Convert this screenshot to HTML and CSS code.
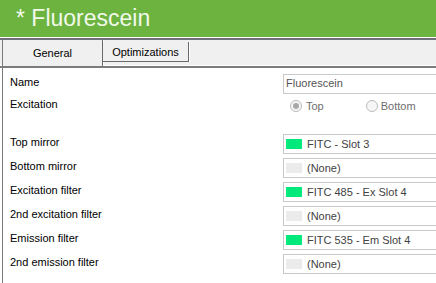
FILE: index.html
```html
<!DOCTYPE html>
<html>
<head>
<meta charset="utf-8">
<link rel="stylesheet" href="styles.css">
</head>
<body>
<div class="title">* Fluorescein</div>
<div class="tabstrip">
  <div class="tab selected">General</div>
  <div class="tab">Optimizations</div>
</div>
<div class="panel">
  <div class="row name-row">
    <div class="label">Name</div>
    <div class="box text">Fluorescein</div>
  </div>
  <div class="row exc-row">
    <div class="label">Excitation</div>
    <div class="radios">
      <span class="radio on"></span><span class="rtext">Top</span>
      <span class="radio second"></span><span class="rtext">Bottom</span>
    </div>
  </div>
  <div class="row first-combo">
    <div class="label">Top mirror</div>
    <div class="box combo"><span class="sw green"></span>FITC - Slot 3</div>
  </div>
  <div class="row">
    <div class="label">Bottom mirror</div>
    <div class="box combo"><span class="sw none"></span>(None)</div>
  </div>
  <div class="row">
    <div class="label">Excitation filter</div>
    <div class="box combo"><span class="sw green"></span>FITC 485 - Ex Slot 4</div>
  </div>
  <div class="row">
    <div class="label">2nd excitation filter</div>
    <div class="box combo"><span class="sw none"></span>(None)</div>
  </div>
  <div class="row">
    <div class="label">Emission filter</div>
    <div class="box combo"><span class="sw green"></span>FITC 535 - Em Slot 4</div>
  </div>
  <div class="row">
    <div class="label">2nd emission filter</div>
    <div class="box combo"><span class="sw none"></span>(None)</div>
  </div>
</div>
</body>
</html>
```

FILE: styles.css
```css
html, body {
  margin: 0;
  padding: 0;
  background: #ffffff;
}
body {
  width: 436px;
  height: 283px;
  overflow: hidden;
  font-family: "Liberation Sans", Arial, sans-serif;
  font-size: 11px;
  color: #000;
}
.title {
  height: 37px;
  line-height: 37px;
  background: #6cb33f;
  color: #f1f9eb;
  font-size: 23px;
  padding-left: 16px;
  white-space: nowrap;
}
.tabstrip {
  margin-top: 1px;
  border-top: 2px solid #70707c;
  border-bottom: 2px solid #7c7c7c;
  background: #f0f0f0;
  height: 26px;
  padding-left: 2px;
  display: flex;
  align-items: flex-start;
  box-shadow: inset 0 -3px 0 -2px #ffffff;
}
.tab {
  box-sizing: border-box;
  height: 20px;
  margin-top: 2px;
  line-height: 18px;
  text-align: center;
  border-right: 1px solid #6a6a6a;
  border-bottom: 1px solid #6a6a6a;
  box-shadow: 1px 0 0 #ffffff;
  width: 86px;
  padding-top: 1px;
  background: #f0f0f0;
}
.tab.selected {
  height: 26px;
  margin-top: 0;
  width: 101px;
  border-left: 1px solid #7a7a7a;
  border-bottom: none;
  line-height: 20px;
  padding-top: 3px;
}
.panel {
  margin-left: 2px;
  border-left: 1px solid #7a7a7a;
  padding-top: 6px;
  height: 220px;
  display: flex;
  flex-direction: column;
  gap: 4px;
  overflow: hidden;
}
.row {
  display: flex;
  align-items: flex-start;
  height: 20px;
}
.label {
  width: 273px;
  padding-left: 7px;
  padding-top: 2px;
  line-height: 13px;
  flex: none;
}
.exc-row {
  margin-top: -2px;
}
.first-combo {
  margin-top: 14px;
}
.box {
  box-sizing: border-box;
  flex: 1 1 auto;
  min-width: 0;
  height: 20px;
  border: 1px solid #c9c9c9;
  border-right: none;
  background: #ffffff;
  line-height: 16px;
  white-space: nowrap;
  overflow: hidden;
}
.box.text {
  padding-left: 2px;
  color: #555555;
}
.box.combo {
  display: flex;
  align-items: center;
  color: #424242;
  line-height: 16px;
  padding-bottom: 1px;
}
.sw {
  width: 16px;
  height: 10px;
  margin-left: 2px;
  margin-right: 5px;
  margin-top: 1px;
  flex: none;
}
.sw.green {
  background: #00e97a;
}
.sw.none {
  background: #ebebeb;
}
.radios {
  display: flex;
  align-items: center;
  height: 20px;
  color: #6e6e6e;
}
.radio {
  box-sizing: border-box;
  width: 12px;
  height: 12px;
  border-radius: 50%;
  border: 1px solid #bcbcbc;
  background: #f6f6f6;
  margin-left: 7px;
  margin-right: 4px;
  display: flex;
  align-items: center;
  justify-content: center;
}
.radio.on::after {
  content: "";
  width: 6px;
  height: 6px;
  border-radius: 50%;
  background: #a8a8a8;
}
.radio.second {
  margin-left: 42px;
  margin-right: 3px;
}
.rtext {
  line-height: 13px;
}
```
